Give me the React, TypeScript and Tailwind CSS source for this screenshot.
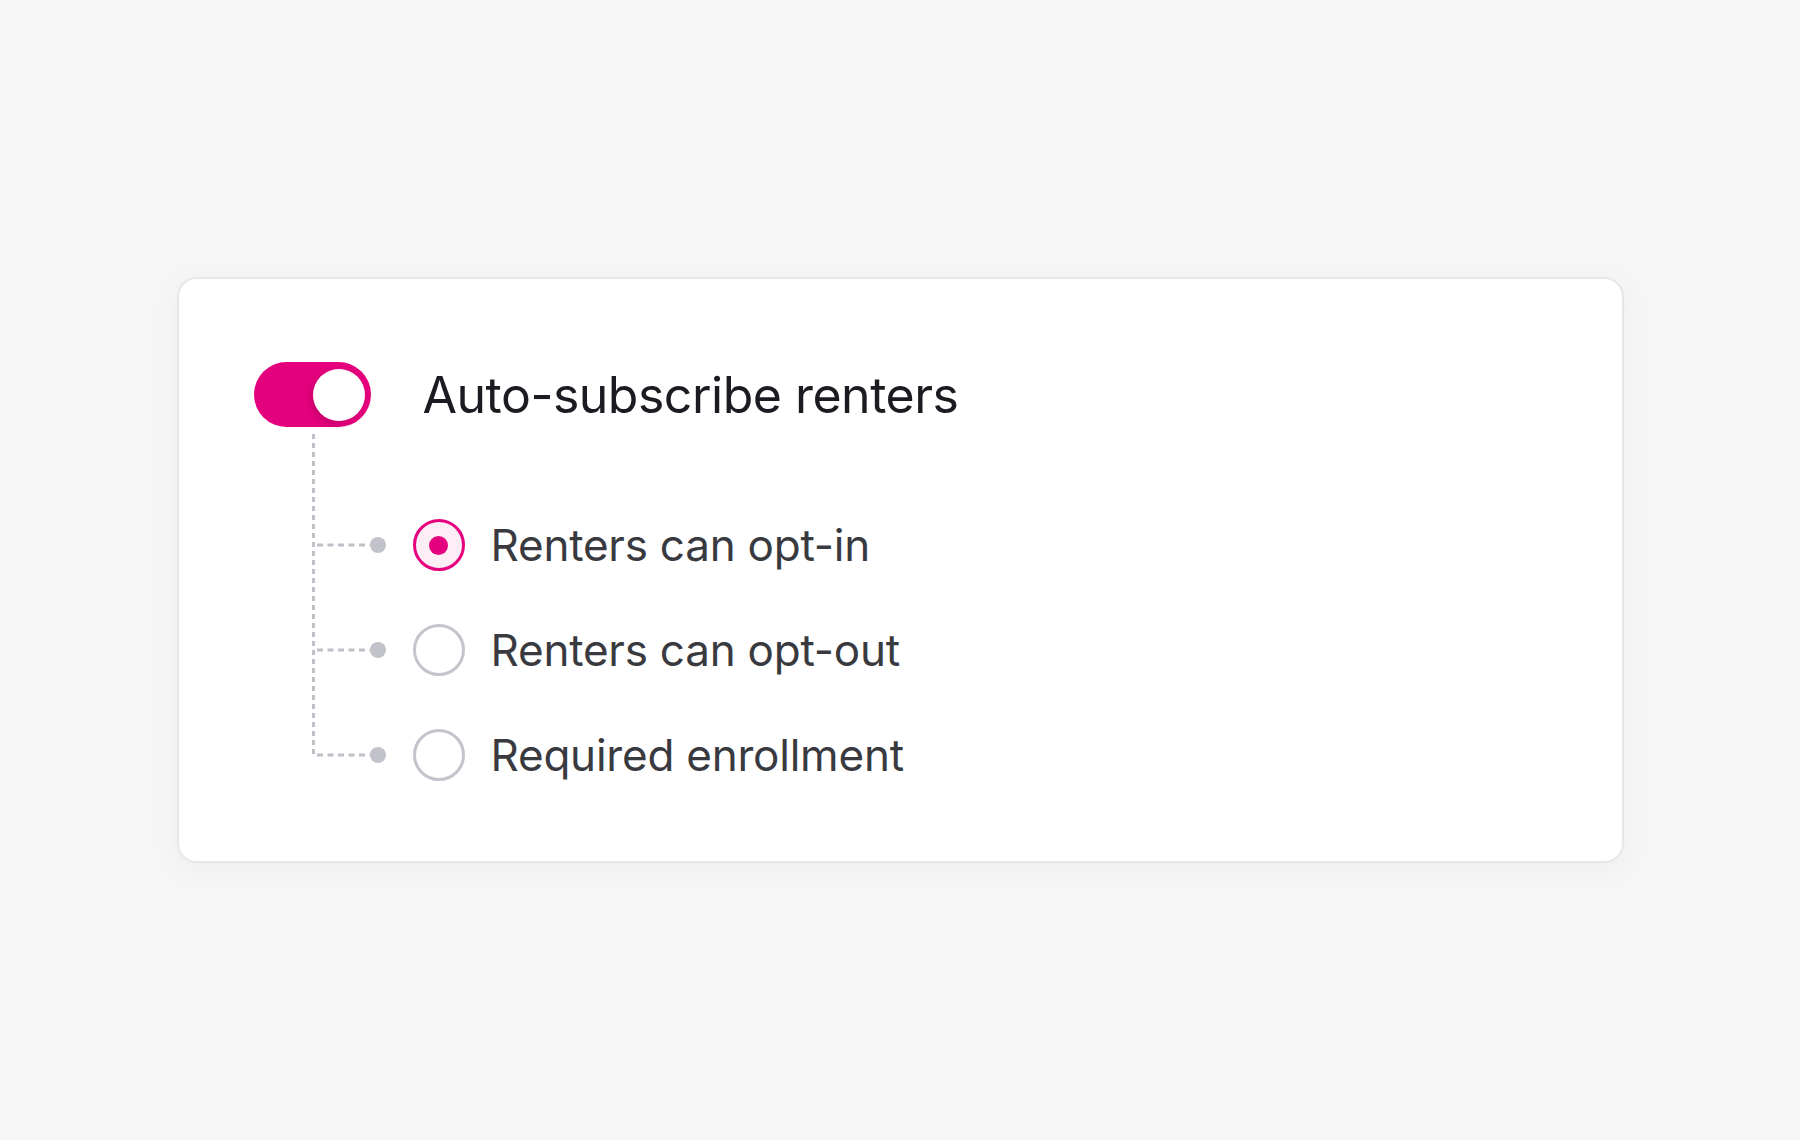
import { useState } from 'react';

const PINK = '#e5007d';
const LINE = '#bfc0c8';

const options = ['Renters can opt-in', 'Renters can opt-out', 'Required enrollment'];

// row centres, relative to the top of the tree drawing
const ROW_Y = [111, 216, 321];

function Tree() {
  return (
    <svg width="74" height="347" viewBox="0 0 74 347" className="shrink-0">
      <line x1="1.5" y1="0" x2="1.5" y2={ROW_Y[2] + 1.5} stroke={LINE} strokeWidth="3" strokeDasharray="5 4" />
      {ROW_Y.map((y) => (
        <g key={y}>
          <line x1="5" y1={y} x2="58" y2={y} stroke={LINE} strokeWidth="3" strokeDasharray="6 4.5" />
          <circle cx="66" cy={y} r="8" fill="#c1c2ca" />
        </g>
      ))}
    </svg>
  );
}

function Radio({ checked }: { checked: boolean }) {
  return checked ? (
    <span className="w-[52px] h-[52px] rounded-full border-[3px] border-[#e5007d] bg-[#fdeef6] flex items-center justify-center shrink-0">
      <span className="w-[19px] h-[19px] rounded-full bg-[#e5007d]" />
    </span>
  ) : (
    <span className="w-[52px] h-[52px] rounded-full border-[3px] border-[#c4c5cc] bg-white shrink-0" />
  );
}

export default function App() {
  const [on, setOn] = useState(true);
  const [choice, setChoice] = useState(0);

  return (
    <div className="min-h-screen bg-[#f6f6f6] flex items-center justify-center" style={{ fontFamily: 'Inter, "Noto Sans", sans-serif' }}>
      <div className="w-[1447px] bg-white border-2 border-[#e7e7e7] rounded-[20px] shadow-[0_6px_30px_rgba(0,0,0,0.04)] pl-[75px] pt-[83px] pb-[80px]">
        {/* header row */}
        <div className="flex items-center h-[65px]">
          <button
            onClick={() => setOn(!on)}
            className="w-[117px] h-[65px] rounded-full flex items-center justify-end pr-[6px] shrink-0 cursor-pointer"
            style={{ backgroundColor: on ? PINK : '#c4c5cc' }}
          >
            <span className="w-[52px] h-[52px] rounded-full bg-white shadow-[-3px_3px_6px_rgba(120,0,60,0.25)]" />
          </button>
          <h1 className="ml-[52px] text-[50px] leading-none text-[#1b1c21] tracking-[-0.01em]">Auto-subscribe renters</h1>
        </div>

        {/* options with connector */}
        <div className="flex mt-[7px] ml-[58px]">
          <Tree />
          <div className="flex flex-col gap-[53px] pt-[85px] ml-[27px]">
            {options.map((label, i) => (
              <button key={label} onClick={() => setChoice(i)} className="flex items-center h-[52px] cursor-pointer text-left">
                <Radio checked={choice === i} />
                <span className="ml-[26px] text-[44px] leading-none text-[#393a40] tracking-[-0.005em]">{label}</span>
              </button>
            ))}
          </div>
        </div>
      </div>
    </div>
  );
}
